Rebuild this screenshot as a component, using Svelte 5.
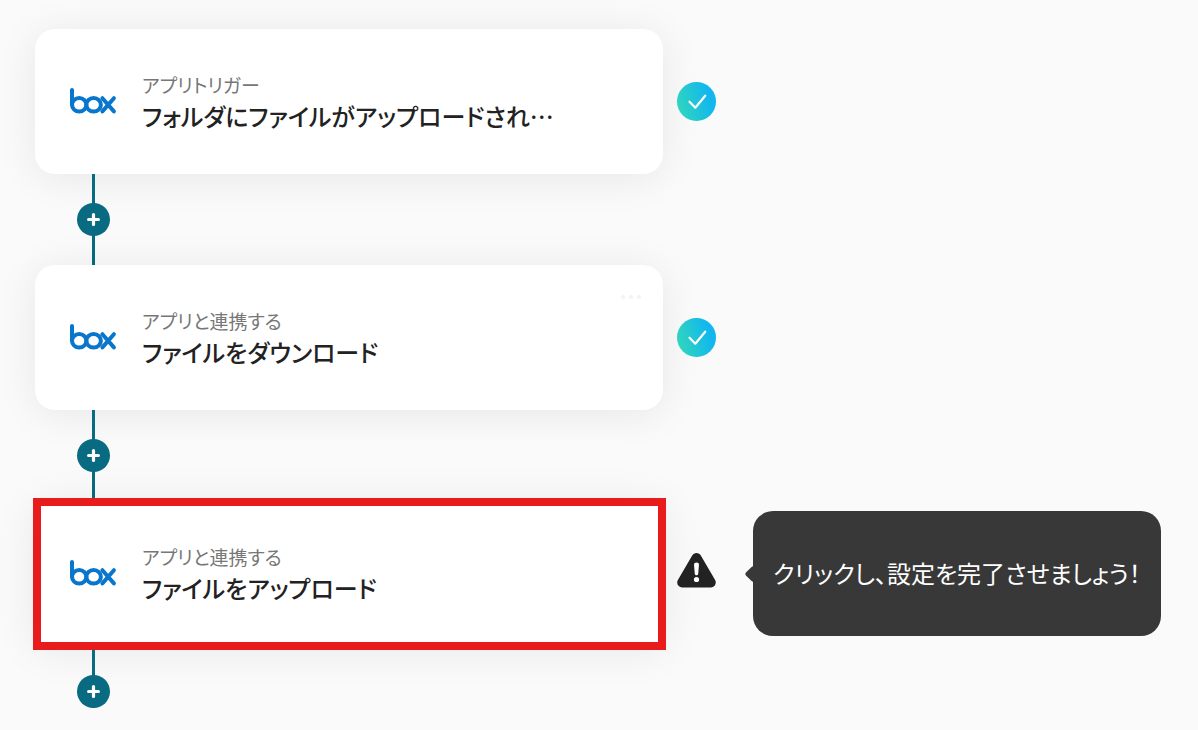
<script>
  const steps = [
    { kind: 'アプリトリガー', title: 'フォルダにファイルがアップロードされ…', done: true },
    { kind: 'アプリと連携する', title: 'ファイルをダウンロード', done: true, menu: true },
    { kind: 'アプリと連携する', title: 'ファイルをアップロード', active: true, hint: 'クリックし、設定を完了させましょう！' }
  ];
</script>

<main class="flow">
  {#each steps as step, i}
    <section class="row">
      <div class="card" class:active={step.active}>
        <svg class="logo" viewBox="0 0 46 26" role="img" aria-label="box">
          <g fill="none" stroke="#0876cc" stroke-width="4" stroke-linecap="round">
            <path d="M2 1V15.5" />
            <ellipse cx="9.2" cy="15.8" rx="7.2" ry="6.8" />
            <ellipse cx="23.6" cy="15.8" rx="7.3" ry="6.8" />
            <path d="M32.4 9.2L43.9 22.4M43.9 9.2L32.4 22.4" />
          </g>
        </svg>
        <div class="text">
          <p class="kind">{step.kind}</p>
          <h2 class="title">{step.title}</h2>
        </div>
        {#if step.menu}
          <button class="menu" aria-label="メニュー"><i></i><i></i><i></i></button>
        {/if}
      </div>

      {#if step.done}
        <svg class="status" viewBox="0 0 39 39" role="img" aria-label="完了">
          <defs>
            <linearGradient id="done-{i}" x1="0" y1="0.65" x2="1" y2="0.35">
              <stop offset="0.08" stop-color="#2ed3c1" />
              <stop offset="0.85" stop-color="#11b7ee" />
            </linearGradient>
          </defs>
          <circle cx="19.5" cy="19.5" r="19.5" fill="url(#done-{i})" />
          <path d="M12.5 19.7L18.3 25.7L28.2 13.7" fill="none" stroke="#fff" stroke-width="2.2" stroke-linecap="round" stroke-linejoin="round" />
        </svg>
      {:else}
        <svg class="status" viewBox="0 0 39 39" role="img" aria-label="未完了">
          <path d="M19.5 4L33.8 28.5H5.2Z" fill="#222" stroke="#222" stroke-width="10" stroke-linejoin="round" />
          <path d="M17 10.4Q17 8.4 19.5 8.4T22 10.4L21.2 20Q21 21.3 19.5 21.3T17.8 20Z" fill="#fff" />
          <circle cx="19.5" cy="25.5" r="2.6" fill="#fff" />
        </svg>
      {/if}

      {#if step.hint}
        <div class="hint" role="tooltip">{step.hint}</div>
      {/if}
    </section>

    <div class="link" class:last={i === steps.length - 1}>
      <button class="add" aria-label="ステップを追加">
        <svg viewBox="0 0 33 33" aria-hidden="true">
          <path d="M16.5 11.6V21.4M11.6 16.5H21.4" stroke="#fff" stroke-width="3.2" stroke-linecap="round" />
        </svg>
      </button>
    </div>
  {/each}
</main>

<style>
  :global(body) {
    margin: 0;
    background: #fafafa;
  }
  .flow {
    box-sizing: border-box;
    padding: 29px 35px 22px;
    font-family: 'Noto Sans CJK JP', sans-serif;
    font-feature-settings: 'palt';
    color: #222;
  }
  .row {
    display: flex;
    align-items: center;
    gap: 14px;
  }
  .card {
    position: relative;
    display: flex;
    align-items: center;
    gap: 26px;
    box-sizing: border-box;
    flex: 0 1 628px;
    min-width: 0;
    min-height: 145px;
    padding: 24px 35px;
    border-radius: 20px;
    background: #fff;
    box-shadow: 0 4px 40px rgba(0, 0, 0, 0.08);
  }
  .card.active {
    border-radius: 0;
  }
  .card.active::after {
    content: '';
    position: absolute;
    z-index: 1;
    inset: -3px -3px -4px -2px;
    border: 8px solid #e81c1c;
    pointer-events: none;
  }
  .logo {
    flex: none;
    width: 46px;
    height: 26px;
    overflow: visible;
  }
  .text {
    min-width: 0;
  }
  .kind {
    margin: 0;
    font-size: 19px;
    line-height: 28px;
    color: #777;
  }
  .title {
    margin: 0;
    font-size: 24px;
    font-weight: 500;
    line-height: 34px;
    white-space: nowrap;
    overflow: hidden;
    text-overflow: ellipsis;
  }
  .menu {
    position: absolute;
    top: 24px;
    right: 20px;
    display: flex;
    align-items: center;
    gap: 4px;
    height: 16px;
    padding: 0 2px;
    border: 0;
    background: none;
  }
  .menu i {
    width: 4px;
    height: 4px;
    border-radius: 50%;
    background: #f3f3f3;
  }
  .status {
    position: relative;
    flex: none;
    width: 39px;
    height: 39px;
    overflow: visible;
  }
  .hint {
    position: relative;
    flex: none;
    box-sizing: border-box;
    margin-left: 23px;
    padding: 43px 20px 45px;
    border-radius: 20px;
    background: #383838;
    color: #fff;
    font-size: 24px;
    line-height: 37px;
    white-space: nowrap;
  }
  .hint::before {
    content: '';
    position: absolute;
    left: -6px;
    top: 50%;
    width: 12px;
    height: 12px;
    margin-top: -6px;
    border-radius: 2px;
    background: #383838;
    transform: rotate(45deg);
  }
  .link {
    position: relative;
    display: flex;
    align-items: center;
    justify-content: center;
    width: 33px;
    height: 91px;
    margin-left: 42px;
    background: linear-gradient(#086b81, #086b81) center / 3px 100% no-repeat;
  }
  .link.last {
    align-items: flex-end;
    height: 62px;
  }
  .add {
    width: 33px;
    height: 33px;
    padding: 0;
    border: 0;
    border-radius: 50%;
    background: #086b81;
    cursor: pointer;
  }
  .add svg {
    display: block;
    width: 33px;
    height: 33px;
  }
</style>
